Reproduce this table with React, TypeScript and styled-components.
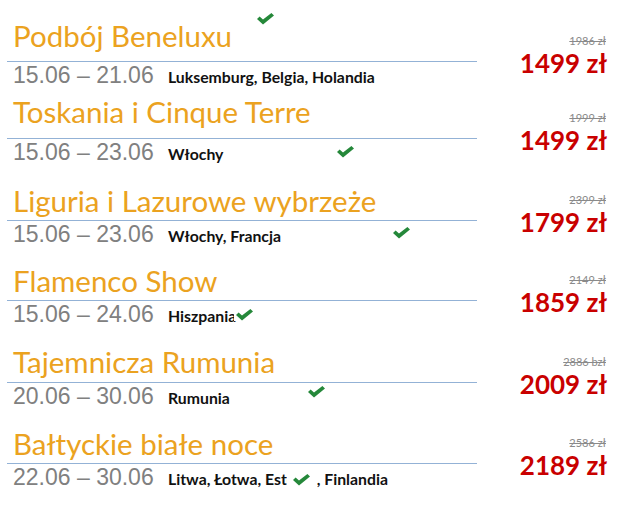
import React from 'react'
import styled, { createGlobalStyle } from 'styled-components'

const GlobalStyle = createGlobalStyle`
    html, body {
        margin: 0;
        padding: 0;
        background: #ffffff;
    }
`

const Page = styled.div`
    width: 620px;
    height: 530px;
    box-sizing: border-box;
    padding: 22px 13px 0 7px;
    background: #ffffff;
    overflow: hidden;
`

const Row = styled.div<{ space: number }>`
    position: relative;
    display: grid;
    grid-template-columns: 470px 1fr;
    grid-template-rows: auto auto auto;
    margin-top: ${({ space }) => space}px;
`

const Title = styled.div<{ gap: number }>`
    grid-column: 1;
    grid-row: 1;
    padding-left: 6px;
    margin-bottom: ${({ gap }) => gap}px;
    font-family: Lato, 'Liberation Sans', sans-serif;
    font-size: 29.5px;
    line-height: 28px;
    color: #eba220;
    white-space: nowrap;
`

const Rule = styled.div`
    grid-column: 1;
    grid-row: 2;
    height: 1px;
    background: #93b2d6;
`

const DateLine = styled.div`
    grid-column: 1;
    grid-row: 3;
    display: flex;
    align-items: baseline;
    margin-top: 2px;
    padding-left: 6px;
    white-space: nowrap;
`

const Dates = styled.span`
    width: 155px;
    flex: none;
    font-family: 'Liberation Sans', Arial, sans-serif;
    font-size: 23px;
    line-height: 23px;
    color: #808080;
`

const Countries = styled.span`
    position: relative;
    font-family: Lato, 'Liberation Sans', sans-serif;
    font-weight: 700;
    font-size: 15.8px;
    color: #111111;
`

const Covered = styled.span`
    position: relative;
`

const Cover = styled.span`
    position: absolute;
    inset: -2px 0 -2px 0;
    display: flex;
    align-items: flex-end;
    justify-content: center;
    padding-bottom: 4px;
    background: #ffffff;
`

const Price = styled.div<{ offset: number }>`
    grid-column: 2;
    grid-row: 1 / span 3;
    align-self: start;
    margin-top: ${({ offset }) => offset}px;
    display: flex;
    flex-direction: column;
    align-items: flex-end;
    font-family: Lato, 'Liberation Sans', sans-serif;
`

const OldPrice = styled.span`
    font-size: 11px;
    line-height: 13px;
    color: #8a8a8a;
    text-decoration: line-through;
    margin-right: 1px;
`

const NewPrice = styled.span`
    font-size: 26px;
    line-height: 32px;
    font-weight: 700;
    color: #c90000;
`

const Stamp = styled.span<{ x: number; y: number }>`
    position: absolute;
    left: ${({ x }) => x}px;
    top: ${({ y }) => y}px;
    line-height: 0;
`

const TailStamp = styled.span`
    position: absolute;
    left: calc(100% - 2px);
    bottom: 4px;
    padding: 0 2px;
    background: #ffffff;
    line-height: 0;
`

const Check = () => (
    <svg width="17" height="12" viewBox="0 0 17 12">
        <polygon points="0,6 2.6,3.4 6,6.6 14.4,0 17,2.6 6,11.6" fill="#25883a" />
    </svg>
)

type Trip = {
    title: string
    dates: string
    countries: React.ReactNode
    oldPrice: string
    price: string
    space: number
    gap: number
    stamp?: { x: number; y: number }
}

const trips: Trip[] = [
    {
        title: 'Podbój Beneluxu',
        dates: '15.06 – 21.06',
        countries: 'Luksemburg, Belgia, Holandia',
        oldPrice: '1986 zł',
        price: '1499 zł',
        space: 0,
        gap: 11,
        stamp: { x: 250, y: -9 },
    },
    {
        title: 'Toskania i Cinque Terre',
        dates: '15.06 – 23.06',
        countries: 'Włochy',
        oldPrice: '1999 zł',
        price: '1499 zł',
        space: 11,
        gap: 12,
        stamp: { x: 330, y: 48 },
    },
    {
        title: 'Liguria i Lazurowe wybrzeże',
        dates: '15.06 – 23.06',
        countries: 'Włochy, Francja',
        oldPrice: '2399 zł',
        price: '1799 zł',
        space: 23,
        gap: 5,
        stamp: { x: 386, y: 40 },
    },
    {
        title: 'Flamenco Show',
        dates: '15.06 – 24.06',
        countries: (
            <>
                Hiszpania
                <TailStamp>
                    <Check />
                </TailStamp>
            </>
        ),
        oldPrice: '2149 zł',
        price: '1859 zł',
        space: 21,
        gap: 5,
    },
    {
        title: 'Tajemnicza Rumunia',
        dates: '20.06 – 30.06',
        countries: 'Rumunia',
        oldPrice: '2886 bzł',
        price: '2009 zł',
        space: 22,
        gap: 6,
        stamp: { x: 301, y: 38 },
    },
    {
        title: 'Bałtyckie białe noce',
        dates: '22.06 – 30.06',
        countries: (
            <>
                Litwa, Łotwa, Est
                <Covered>
                    onia
                    <Cover>
                        <Check />
                    </Cover>
                </Covered>
                , Finlandia
            </>
        ),
        oldPrice: '2586 zł',
        price: '2189 zł',
        space: 22,
        gap: 5,
    },
]

export default function App() {
    return (
        <>
            <GlobalStyle />
            <Page>
                {trips.map((trip) => (
                    <Row key={trip.title} space={trip.space}>
                        <Title gap={trip.gap}>{trip.title}</Title>
                        <Rule />
                        <DateLine>
                            <Dates>{trip.dates}</Dates>
                            <Countries>{trip.countries}</Countries>
                        </DateLine>
                        <Price offset={trip.gap + 1}>
                            <OldPrice>{trip.oldPrice}</OldPrice>
                            <NewPrice>{trip.price}</NewPrice>
                        </Price>
                        {trip.stamp && (
                            <Stamp x={trip.stamp.x} y={trip.stamp.y}>
                                <Check />
                            </Stamp>
                        )}
                    </Row>
                ))}
            </Page>
        </>
    )
}
